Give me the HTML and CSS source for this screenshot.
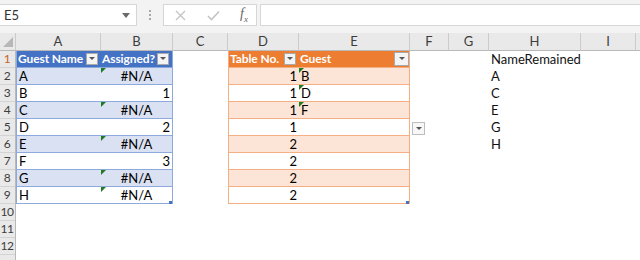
FILE: index.html
```html
<!DOCTYPE html>
<html lang="en">
<head>
    <meta charset="UTF-8">
    <title>Table Assignment</title>
    <link rel="stylesheet" href="styles.css">
</head>
<body>
    <!-- Formula Bar -->
    <div class="topbar">
        <div class="namebox">
            <span>E5</span>
            <span class="caret"></span>
        </div>
        <div class="dots">
            <i></i><i></i><i></i>
        </div>
        <div class="fbuttons">
            <svg width="11" height="11" viewBox="0 0 11 11"><path d="M1 1 L10 10 M10 1 L1 10" stroke="#c4c4c4" stroke-width="1.3" fill="none"/></svg>
            <svg width="13" height="11" viewBox="0 0 13 11"><path d="M1 6 L4.5 9.5 L12 1.5" stroke="#c4c4c4" stroke-width="1.6" fill="none"/></svg>
            <span class="fx">f<sub>x</sub></span>
        </div>
        <div class="finput"></div>
    </div>

    <!-- Sheet -->
    <div class="sheet">
        <div class="colhead corner">
            <svg width="10" height="10" viewBox="0 0 10 10"><path d="M10 0 L10 10 L0 10 Z" fill="#b7b7b7"/></svg>
        </div>
        <div class="colhead">A</div>
        <div class="colhead">B</div>
        <div class="colhead">C</div>
        <div class="colhead">D</div>
        <div class="colhead">E</div>
        <div class="colhead">F</div>
        <div class="colhead">G</div>
        <div class="colhead">H</div>
        <div class="colhead">I</div>
        <div class="colhead last"></div>

        <div class="rowheads">
            <div class="rowhead first"><span>1</span></div>
            <div class="rowhead"><span>2</span></div>
            <div class="rowhead"><span>3</span></div>
            <div class="rowhead"><span>4</span></div>
            <div class="rowhead"><span>5</span></div>
            <div class="rowhead"><span>6</span></div>
            <div class="rowhead"><span>7</span></div>
            <div class="rowhead"><span>8</span></div>
            <div class="rowhead"><span>9</span></div>
            <div class="rowhead"><span>10</span></div>
            <div class="rowhead"><span>11</span></div>
            <div class="rowhead"><span>12</span></div>
            <div class="rowhead"></div>
        </div>

        <!-- Guest table -->
        <div class="xtable blue t1">
            <div class="trow head">
                <div class="cell c1">Guest Name<span class="dd"></span></div>
                <div class="cell c2">Assigned?<span class="dd"></span></div>
            </div>
            <div class="trow band">
                <div class="cell c1">A</div>
                <div class="cell c2 err center">#N/A</div>
            </div>
            <div class="trow">
                <div class="cell c1">B</div>
                <div class="cell c2 num">1</div>
            </div>
            <div class="trow band">
                <div class="cell c1">C</div>
                <div class="cell c2 err center">#N/A</div>
            </div>
            <div class="trow">
                <div class="cell c1">D</div>
                <div class="cell c2 num">2</div>
            </div>
            <div class="trow band">
                <div class="cell c1">E</div>
                <div class="cell c2 err center">#N/A</div>
            </div>
            <div class="trow">
                <div class="cell c1">F</div>
                <div class="cell c2 num">3</div>
            </div>
            <div class="trow band">
                <div class="cell c1">G</div>
                <div class="cell c2 err center">#N/A</div>
            </div>
            <div class="trow">
                <div class="cell c1">H</div>
                <div class="cell c2 err center">#N/A</div>
            </div>
            <span class="handle"></span>
        </div>

        <!-- Seating table -->
        <div class="xtable orange t2">
            <div class="trow head">
                <div class="cell c1">Table No.<span class="dd"></span></div>
                <div class="cell c2">Guest<span class="dd wide"></span></div>
            </div>
            <div class="trow band">
                <div class="cell c1 num">1</div>
                <div class="cell c2 err">B</div>
            </div>
            <div class="trow">
                <div class="cell c1 num">1</div>
                <div class="cell c2 err">D</div>
            </div>
            <div class="trow band">
                <div class="cell c1 num">1</div>
                <div class="cell c2 err">F</div>
            </div>
            <div class="trow">
                <div class="cell c1 num">1</div>
                <div class="cell c2"><span class="validation"></span></div>
            </div>
            <div class="trow band">
                <div class="cell c1 num">2</div>
                <div class="cell c2"></div>
            </div>
            <div class="trow">
                <div class="cell c1 num">2</div>
                <div class="cell c2"></div>
            </div>
            <div class="trow band">
                <div class="cell c1 num">2</div>
                <div class="cell c2"></div>
            </div>
            <div class="trow">
                <div class="cell c1 num">2</div>
                <div class="cell c2"></div>
            </div>
            <span class="handle"></span>
        </div>

        <!-- Remaining names -->
        <div class="hlist">
            <div>NameRemained</div>
            <div>A</div>
            <div>C</div>
            <div>E</div>
            <div>G</div>
            <div>H</div>
        </div>
    </div>
</body>
</html>
```

FILE: styles.css
```css
/* Global */
body, html {
    margin: 0;
    padding: 0;
    background: #ffffff;
    font-family: 'Lato', 'Liberation Sans', sans-serif;
    font-size: 13px;
    color: #000;
    overflow: hidden;
}

/* Formula Bar */
.topbar {
    height: 33px;
    box-sizing: border-box;
    padding-top: 4px;
    background: #f3f3f3;
    display: flex;
    align-items: flex-start;
}

.namebox {
    width: 137px;
    height: 22px;
    box-sizing: border-box;
    background: #fff;
    border: 1px solid #d6d6d6;
    border-left: none;
    display: flex;
    align-items: center;
    justify-content: space-between;
    padding: 0 6px 0 4px;
    color: #333;
}

.caret {
    width: 0;
    height: 0;
    border-left: 4px solid transparent;
    border-right: 4px solid transparent;
    border-top: 5px solid #6a6a6a;
}

.dots {
    width: 26px;
    height: 22px;
    display: flex;
    flex-direction: column;
    align-items: center;
    justify-content: center;
    gap: 2px;
}

.dots i {
    width: 2px;
    height: 2px;
    background: #a8a8a8;
}

.fbuttons {
    width: 94px;
    height: 22px;
    box-sizing: border-box;
    background: #fff;
    border: 1px solid #d6d6d6;
    display: flex;
    align-items: center;
    justify-content: space-between;
    padding: 0 8px 0 11px;
}

.fx {
    font-family: 'Liberation Serif', serif;
    font-style: italic;
    font-size: 14px;
    color: #666;
}

.fx sub {
    font-size: 9px;
}

.finput {
    flex: 1;
    height: 22px;
    box-sizing: border-box;
    margin-left: 3px;
    background: #fff;
    border: 1px solid #d6d6d6;
    border-right: none;
}

/* Sheet Grid */
.sheet {
    display: grid;
    grid-template-columns: 16px 85px 72px 55px 71px 111px 39px 40px 92px 55px 1fr;
    grid-template-rows: 18px repeat(13, 17px);
}

.colhead {
    background: #e9e9e9;
    border-bottom: 1px solid #b9b9b9;
    border-right: 1px solid #cbcbcb;
    box-sizing: border-box;
    text-align: center;
    line-height: 17px;
    color: #3c3c3c;
}

.colhead.last {
    border-right: none;
}

.corner {
    display: flex;
    align-items: flex-end;
    justify-content: flex-end;
    padding: 0 2px 3px 0;
}

.rowheads {
    grid-column: 1;
    grid-row: 2 / 15;
    background: #e9e9e9;
    border-right: 1px solid #b9b9b9;
    overflow: hidden;
}

.rowhead {
    height: 17px;
    box-sizing: border-box;
    border-bottom: 1px solid #d3d3d3;
    line-height: 16px;
    font-size: 12px;
    color: #3c3c3c;
}

.rowhead span {
    display: block;
    width: 14px;
    text-align: center;
    letter-spacing: -0.5px;
}

.rowhead.first {
    color: #c8641e;
}

/* Excel Tables */
.xtable {
    grid-row: 2 / 11;
    position: relative;
    border-left: 1px solid;
    border-right: 1px solid;
}

.t1 {
    grid-column: 2 / 4;
}

.t2 {
    grid-column: 5 / 7;
}

.trow {
    height: 17px;
    box-sizing: border-box;
    display: flex;
    border-bottom: 1px solid;
}

.cell {
    position: relative;
    line-height: 16px;
    padding: 0 2px;
    white-space: nowrap;
    display: flex;
    align-items: center;
}

.t1 .c1 {
    flex: 0 0 84px;
    box-sizing: border-box;
}

.t2 .c1 {
    flex: 0 0 70px;
    box-sizing: border-box;
}

.c2 {
    flex: 1;
}

.cell.num {
    justify-content: flex-end;
}

.cell.center {
    justify-content: center;
}

.head .cell {
    color: #fff;
    font-weight: bold;
    font-size: 12px;
    letter-spacing: -0.1px;
    justify-content: space-between;
    padding-left: 1px;
}

.blue {
    border-color: #8ea9db;
}

.blue .trow {
    border-color: #8ea9db;
}

.blue .head {
    background: #4472c4;
}

.blue .band {
    background: #d9e1f2;
}

.orange {
    border-color: #f4b084;
}

.orange .trow {
    border-color: #f4b084;
}

.orange .head {
    background: #ed7d31;
}

.orange .band {
    background: #fce4d6;
}

/* Filter dropdowns */
.dd {
    position: relative;
    width: 12px;
    height: 12px;
    flex: none;
    box-sizing: border-box;
    background: #f4f4f4;
    border: 1px solid #a9a9a9;
    margin-right: 1px;
}

.dd.wide {
    width: 15px;
    height: 14px;
    margin-right: -2px;
}

.dd::after {
    content: '';
    position: absolute;
    left: 50%;
    top: 50%;
    margin: -2px 0 0 -3px;
    border-left: 3px solid transparent;
    border-right: 3px solid transparent;
    border-top: 3px solid #555;
}

.validation {
    position: absolute;
    right: -16px;
    top: 3px;
    width: 13px;
    height: 13px;
    box-sizing: border-box;
    background: #f7f7f7;
    border: 1px solid #bdbdbd;
}

.validation::after {
    content: '';
    position: absolute;
    left: 3px;
    top: 4px;
    border-left: 3px solid transparent;
    border-right: 3px solid transparent;
    border-top: 3px solid #555;
}

/* Error indicator */
.err::before {
    content: '';
    position: absolute;
    top: 0;
    left: 0;
    border-top: 5px solid #1e7b22;
    border-right: 5px solid transparent;
}

/* Resize handle */
.handle {
    position: absolute;
    right: 0;
    bottom: 0;
    width: 3px;
    height: 3px;
    background: #4472c4;
}

/* Remaining names list */
.hlist {
    grid-column: 9;
    grid-row: 2 / 8;
}

.hlist div {
    height: 17px;
    line-height: 16px;
    padding-left: 2px;
    color: #111;
}
```
